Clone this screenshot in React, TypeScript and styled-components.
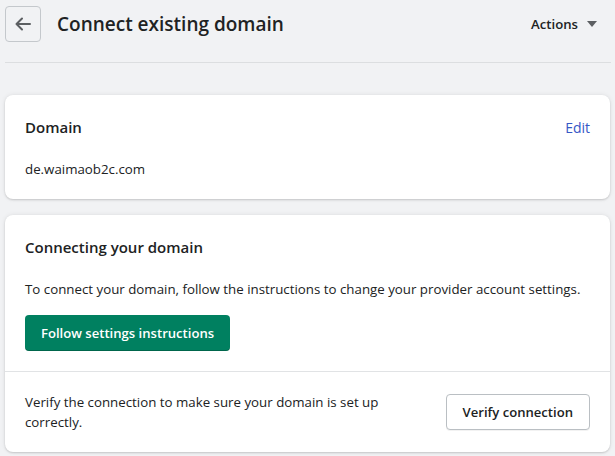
import React from "react";
import styled, { createGlobalStyle } from "styled-components";

const Global = createGlobalStyle`
  html, body { margin: 0; padding: 0; background: #f1f2f4; }
  body {
    font-family: "Open Sans", "Noto Sans", "Liberation Sans", sans-serif;
    color: #202223;
    -webkit-font-smoothing: antialiased;
  }
  * { box-sizing: border-box; }
`;

const Page = styled.div`
  width: 615px;
  height: 456px;
  overflow: hidden;
  padding: 0 4px 0 5px;
`;

const Header = styled.header`
  display: flex;
  align-items: flex-start;
  height: 63px;
  padding-top: 6px;
  border-bottom: 1px solid #dcdee0;
  margin-bottom: 32px;
`;

const BackButton = styled.button`
  width: 36px;
  height: 36px;
  border: 1px solid #c4c8cc;
  border-radius: 4px;
  background: transparent;
  display: flex;
  align-items: center;
  justify-content: center;
  padding: 0;
  color: #5c5f62;
  margin-right: 16px;
  flex-shrink: 0;
`;

const Title = styled.h1`
  margin: 0;
  font-size: 19px;
  line-height: 36px;
  font-weight: 600;
  flex: 1;
`;

const Actions = styled.div`
  display: flex;
  align-items: center;
  gap: 9px;
  height: 36px;
  font-size: 13.2px;
  font-weight: 600;
  color: #202223;
  margin-right: 14px;
`;

const Stack = styled.div`
  display: flex;
  flex-direction: column;
  gap: 16px;
  padding-right: 1px;
`;

const Card = styled.section`
  background: #fff;
  border-radius: 8px;
  box-shadow: 0 0 5px rgba(23, 24, 24, 0.08), 0 1px 2px rgba(0, 0, 0, 0.15);
  overflow: hidden;
`;

const CardSection = styled.div<{ $divided?: boolean }>`
  padding: 20px;
  border-top: ${(p) => (p.$divided ? "1px solid #e1e3e5" : "none")};
`;

const CardHead = styled.div`
  display: flex;
  justify-content: space-between;
  align-items: center;
  margin-bottom: 20px;
`;

const CardTitle = styled.h2`
  margin: 0;
  font-size: 15px;
  font-weight: 600;
  line-height: 24px;
`;

const LinkButton = styled.button`
  background: none;
  border: none;
  padding: 0;
  font: inherit;
  font-size: 14px;
  color: #3557c5;
`;

const Text = styled.p`
  margin: 0;
  font-size: 13.3px;
  line-height: 20px;
`;

const PrimaryButton = styled.button`
  margin-top: 16px;
  height: 36px;
  padding: 0 16px;
  border: none;
  border-radius: 4px;
  background: #008060;
  color: #fff;
  font: inherit;
  font-size: 13.1px;
  font-weight: 600;
  box-shadow: inset 0 -1px 0 rgba(0, 0, 0, 0.2);
`;

const VerifyRow = styled.div`
  display: flex;
  align-items: center;
  justify-content: space-between;
  gap: 40px;
`;

const VerifyText = styled(Text)`
  max-width: 380px;
`;

const SecondaryButton = styled.button`
  flex-shrink: 0;
  height: 36px;
  padding: 0 16px;
  border: 1px solid #babfc3;
  border-radius: 4px;
  background: #fff;
  color: #202223;
  font: inherit;
  font-size: 13.1px;
  font-weight: 600;
  box-shadow: 0 1px 0 rgba(0, 0, 0, 0.05);
`;

export default function App() {
  return (
    <>
      <Global />
      <Page>
        <Header>
          <BackButton aria-label="Back">
            <svg
              width="18"
              height="18"
              viewBox="0 0 18 18"
              fill="none"
              stroke="currentColor"
              strokeWidth="2"
              strokeLinecap="round"
              strokeLinejoin="round"
            >
              <path d="M16 9H2.5M8 3.5 2.5 9 8 14.5" />
            </svg>
          </BackButton>
          <Title>Connect existing domain</Title>
          <Actions>
            Actions
            <svg width="10" height="6" viewBox="0 0 10 6" fill="#5c5f62">
              <path d="M0 0h10L5 6z" />
            </svg>
          </Actions>
        </Header>
        <Stack>
          <Card>
            <CardSection>
              <CardHead>
                <CardTitle>Domain</CardTitle>
                <LinkButton>Edit</LinkButton>
              </CardHead>
              <Text>de.waimaob2c.com</Text>
            </CardSection>
          </Card>
          <Card>
            <CardSection>
              <CardHead>
                <CardTitle>Connecting your domain</CardTitle>
              </CardHead>
              <Text>
                To connect your domain, follow the instructions to change your provider account settings.
              </Text>
              <PrimaryButton>Follow settings instructions</PrimaryButton>
            </CardSection>
            <CardSection $divided>
              <VerifyRow>
                <VerifyText>
                  Verify the connection to make sure your domain is set up correctly.
                </VerifyText>
                <SecondaryButton>Verify connection</SecondaryButton>
              </VerifyRow>
            </CardSection>
          </Card>
        </Stack>
      </Page>
    </>
  );
}
